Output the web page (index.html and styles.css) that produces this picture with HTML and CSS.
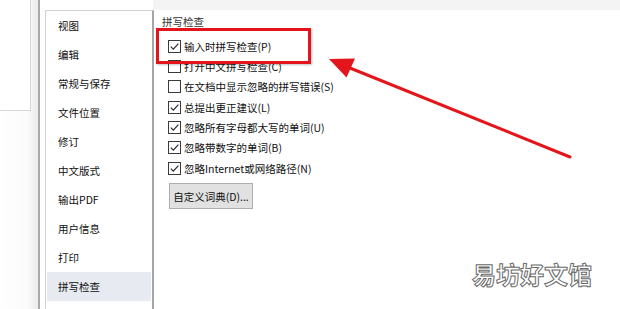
FILE: index.html
```html
<!DOCTYPE html>
<html lang="zh-CN">
<head>
<meta charset="utf-8">
<title>拼写检查</title>
<link rel="stylesheet" href="styles.css">
</head>
<body>
<div class="page">
  <div class="outer"><div class="ghost"></div></div>
  <nav class="nav">
    <div class="item">视图</div>
    <div class="item">编辑</div>
    <div class="item">常规与保存</div>
    <div class="item">文件位置</div>
    <div class="item">修订</div>
    <div class="item">中文版式</div>
    <div class="item">输出PDF</div>
    <div class="item">用户信息</div>
    <div class="item">打印</div>
    <div class="item selected">拼写检查</div>
  </nav>
  <section class="panel">
    <div class="title">拼写检查</div>
    <div class="rows">
      <label class="row"><span class="cb"><svg viewBox="0 0 11 11"><path d="M1.8 5.6 L4.3 8.2 L9.4 2.6"/></svg></span>输入时拼写检查(P)</label>
      <label class="row"><span class="cb"></span>打开中文拼写检查(C)</label>
      <label class="row"><span class="cb"></span>在文档中显示忽略的拼写错误(S)</label>
      <label class="row"><span class="cb"><svg viewBox="0 0 11 11"><path d="M1.8 5.6 L4.3 8.2 L9.4 2.6"/></svg></span>总提出更正建议(L)</label>
      <label class="row"><span class="cb"><svg viewBox="0 0 11 11"><path d="M1.8 5.6 L4.3 8.2 L9.4 2.6"/></svg></span>忽略所有字母都大写的单词(U)</label>
      <label class="row"><span class="cb"><svg viewBox="0 0 11 11"><path d="M1.8 5.6 L4.3 8.2 L9.4 2.6"/></svg></span>忽略带数字的单词(B)</label>
      <label class="row"><span class="cb"><svg viewBox="0 0 11 11"><path d="M1.8 5.6 L4.3 8.2 L9.4 2.6"/></svg></span>忽略Internet或网络路径(N)</label>
    </div>
    <button class="btn">自定义词典(D)...</button>
  </section>

  <div class="highlight"></div>
  <svg class="arrow" width="620" height="309" viewBox="0 0 620 309">
    <line x1="570" y1="157" x2="345" y2="66" />
    <polygon points="329,59 355,58.5 346.5,77.5" />
  </svg>
  <div class="watermark">易坊好文馆</div>
</div>
</body>
</html>
```
FILE: styles.css
```css
html, body {
  margin: 0;
  padding: 0;
  background: #ffffff;
}
body {
  width: 620px;
  height: 309px;
  overflow: hidden;
  font-family: "Noto Sans CJK SC", "Noto Sans", sans-serif;
  font-size: 10.5px;
  color: #0f0f0f;
}
.page {
  position: relative;
  width: 620px;
  height: 309px;
  display: flex;
  align-items: stretch;
  background: linear-gradient(#f4f4f4, #f4f4f4) no-repeat 153px 0 / 467px 10px, #ffffff;
}
.outer {
  width: 38px;
  flex: none;
  border-right: 2px solid #a9a9a9;
  background: linear-gradient(90deg, #ffffff 0%, #fbfbfb 70%, #ececec 100%);
}
.ghost {
  width: 31px;
  height: 111px;
  box-sizing: border-box;
  border-right: 1px solid #d6d6d6;
  border-bottom: 1px solid #d6d6d6;
  background: #ffffff;
}
.nav {
  margin-left: 5px;
  margin-top: 10px;
  width: 109px;
  flex: none;
  box-sizing: border-box;
  border-left: 1px solid #d2d2d2;
  border-top: 1px solid #d2d2d2;
  border-right: 2px solid #a6a6a6;
  padding: 0 1px;
  background: #ffffff;
}
.item {
  height: 29px;
  line-height: 29px;
  padding-left: 11px;
  white-space: nowrap;
}
.item.selected {
  background: #e7eaf0;
}
.panel {
  flex: 1;
  padding-left: 8px;
}
.title {
  height: 14px;
  margin-top: 15px;
  line-height: 14px;
  color: #333;
  white-space: nowrap;
}
.rows {
  margin-top: 7px;
  margin-left: 6px;
  display: flex;
  flex-direction: column;
}
.row {
  height: 20.33px;
  display: flex;
  align-items: center;
  gap: 3px;
  white-space: nowrap;
}
.cb {
  width: 13px;
  height: 13px;
  box-sizing: border-box;
  border: 1px solid #3a3a3a;
  display: inline-flex;
  align-items: center;
  justify-content: center;
  background: #fff;
}
.cb svg {
  width: 11px;
  height: 11px;
}
.cb path {
  fill: none;
  stroke: #2a2a2a;
  stroke-width: 1.2;
}
.btn {
  margin-top: 5px;
  margin-left: 7px;
  width: 84px;
  height: 26px;
  padding: 0;
  border: 1px solid #adadad;
  background: #e1e1e1;
  font-family: "Noto Sans CJK SC", "Noto Sans", sans-serif;
  font-size: 10.5px;
  color: #0f0f0f;
  white-space: nowrap;
  display: block;
}
.highlight {
  position: absolute;
  left: 156px;
  top: 28px;
  width: 149px;
  height: 30px;
  border: 3px solid #e3141b;
  box-shadow: 1px 1px 2px rgba(0, 0, 0, 0.25);
}
.arrow {
  position: absolute;
  left: 0;
  top: 0;
}
.arrow line {
  stroke: #e3161c;
  stroke-width: 3;
  stroke-linecap: round;
}
.arrow polygon {
  fill: #e3161c;
}
.watermark {
  position: absolute;
  left: 472px;
  top: 258px;
  font-size: 24px;
  line-height: 32px;
  font-weight: 700;
  color: #ffffff;
  -webkit-text-stroke: 1px #6a6a6a;
}
```
